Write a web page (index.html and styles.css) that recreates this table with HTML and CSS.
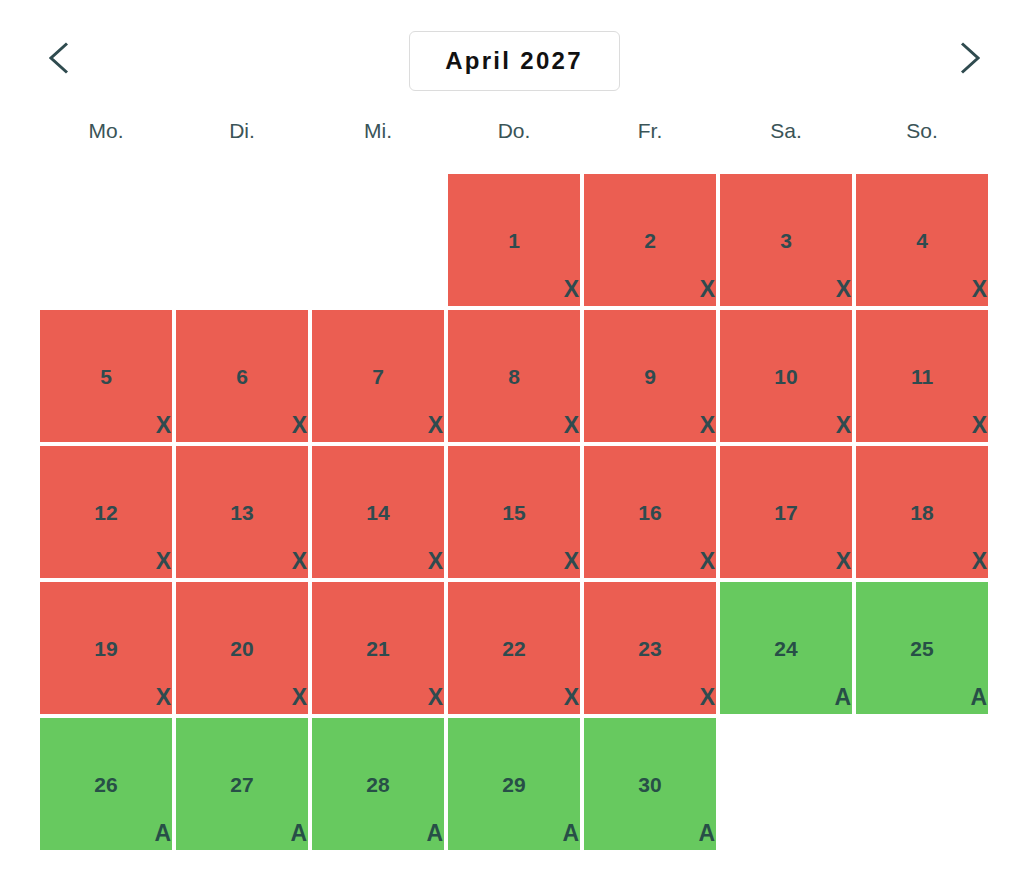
FILE: index.html
```html
<!DOCTYPE html>
<html lang="de">
<head>
<meta charset="utf-8">
<title>April 2027</title>
<link rel="stylesheet" href="styles.css">
</head>
<body>
<div class="cal">
  <div class="head">
    <button class="nav nav-prev" aria-label="Vorheriger Monat">
      <svg width="20" height="32" viewBox="0 0 20 32"><polyline points="18,1.5 2,16 18,30.5" fill="none" stroke="#2f4b4f" stroke-width="3"/></svg>
    </button>
    <div class="title">April 2027</div>
    <button class="nav nav-next" aria-label="Nächster Monat">
      <svg width="20" height="32" viewBox="0 0 20 32"><polyline points="2,1.5 18,16 2,30.5" fill="none" stroke="#2f4b4f" stroke-width="3"/></svg>
    </button>
  </div>
  <div class="weekdays">
    <div>Mo.</div><div>Di.</div><div>Mi.</div><div>Do.</div><div>Fr.</div><div>Sa.</div><div>So.</div>
  </div>
  <div class="grid">
    <div class="empty"></div><div class="empty"></div><div class="empty"></div>
    <div class="day busy">1<span class="mark">X</span></div>
    <div class="day busy">2<span class="mark">X</span></div>
    <div class="day busy">3<span class="mark">X</span></div>
    <div class="day busy">4<span class="mark">X</span></div>
    <div class="day busy">5<span class="mark">X</span></div>
    <div class="day busy">6<span class="mark">X</span></div>
    <div class="day busy">7<span class="mark">X</span></div>
    <div class="day busy">8<span class="mark">X</span></div>
    <div class="day busy">9<span class="mark">X</span></div>
    <div class="day busy">10<span class="mark">X</span></div>
    <div class="day busy">11<span class="mark">X</span></div>
    <div class="day busy">12<span class="mark">X</span></div>
    <div class="day busy">13<span class="mark">X</span></div>
    <div class="day busy">14<span class="mark">X</span></div>
    <div class="day busy">15<span class="mark">X</span></div>
    <div class="day busy">16<span class="mark">X</span></div>
    <div class="day busy">17<span class="mark">X</span></div>
    <div class="day busy">18<span class="mark">X</span></div>
    <div class="day busy">19<span class="mark">X</span></div>
    <div class="day busy">20<span class="mark">X</span></div>
    <div class="day busy">21<span class="mark">X</span></div>
    <div class="day busy">22<span class="mark">X</span></div>
    <div class="day busy">23<span class="mark">X</span></div>
    <div class="day free">24<span class="mark">A</span></div>
    <div class="day free">25<span class="mark">A</span></div>
    <div class="day free">26<span class="mark">A</span></div>
    <div class="day free">27<span class="mark">A</span></div>
    <div class="day free">28<span class="mark">A</span></div>
    <div class="day free">29<span class="mark">A</span></div>
    <div class="day free">30<span class="mark">A</span></div>
  </div>
</div>
</body>
</html>
```
FILE: styles.css
```css
html, body {
  margin: 0;
  padding: 0;
  background: #ffffff;
}

body {
  font-family: "Liberation Sans", Arial, sans-serif;
  color: #2f4b4f;
}

.cal {
  width: 948px;
  padding: 31px 36px 0 40px;
}

.head {
  display: grid;
  grid-template-columns: 1fr auto 1fr;
  align-items: center;
  height: 60px;
}

.nav {
  border: 0;
  background: none;
  padding: 0;
  margin: 0 0 6px 0;
  width: 20px;
  height: 32px;
  cursor: pointer;
  display: block;
}

.nav svg {
  display: block;
}

.nav-prev {
  justify-self: start;
  margin-left: 9px;
}

.nav-next {
  justify-self: end;
  margin-right: 8px;
}

.title {
  box-sizing: border-box;
  width: 211px;
  height: 60px;
  border: 1.5px solid #dcdcdc;
  border-radius: 6px;
  display: flex;
  align-items: center;
  justify-content: center;
  font-weight: 700;
  font-size: 24px;
  letter-spacing: 2.3px;
  color: #111111;
}

.weekdays {
  display: grid;
  grid-template-columns: repeat(7, 132px);
  column-gap: 4px;
  height: 40px;
  margin: 20px 0 23px 0;
  align-items: center;
  text-align: center;
  font-size: 21px;
  color: #3a5457;
}

.grid {
  display: grid;
  grid-template-columns: repeat(7, 132px);
  grid-auto-rows: 132px;
  gap: 4px;
}

.day {
  position: relative;
  display: flex;
  align-items: center;
  justify-content: center;
  padding-top: 1px;
  box-sizing: border-box;
  font-weight: 700;
  font-size: 21px;
  color: #2f4b4f;
}

.busy {
  background: #eb5e52;
}

.free {
  background: #67c95f;
  color: #274f47;
}

.mark {
  position: absolute;
  right: 1px;
  bottom: 5px;
  font-size: 23px;
  line-height: 1;
}
```
